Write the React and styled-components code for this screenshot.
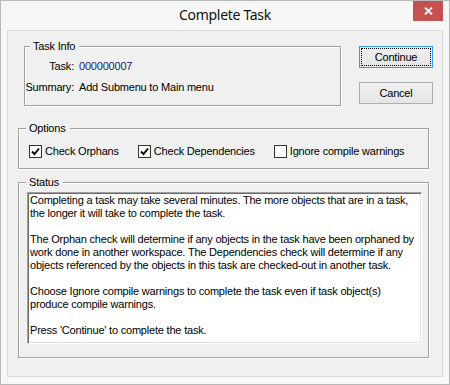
import React from 'react';
import styled, { createGlobalStyle } from 'styled-components';

const GlobalStyle = createGlobalStyle`
	html, body {
		margin: 0;
		padding: 0;
		background: #fff;
	}
	body {
		font-family: "Liberation Sans", Arial, sans-serif;
	}
`;

const Window = styled.div`
	width: 450px;
	height: 385px;
	box-sizing: border-box;
	border: 1px solid #b9b9b9;
	background: #f7f7f7;
	display: flex;
	flex-direction: column;
`;

const TitleBar = styled.div`
	height: 29px;
	flex: none;
	display: grid;
	grid-template-columns: 1fr auto 1fr;
	align-items: start;
`;

const Title = styled.div`
	grid-column: 2;
	font-family: "Noto Sans", "Open Sans", sans-serif;
	font-size: 14px;
	letter-spacing: -0.3px;
	line-height: 28px;
	color: #111;
`;

const CloseButton = styled.div`
	justify-self: end;
	width: 30px;
	height: 20px;
	margin-right: 6px;
	background: #c75050;
	display: flex;
	align-items: center;
	justify-content: center;
`;

const Frame = styled.div`
	flex: 1;
	display: flex;
	padding: 0 6px 7px;
`;

const Client = styled.div`
	flex: 1;
	display: flex;
	flex-direction: column;
	border: 1px solid #d9d9d9;
	background: #f0f0f0;
	font-size: 11px;
	line-height: 13px;
	letter-spacing: -0.2px;
	color: #000;
`;

const TopRow = styled.div`
	display: flex;
	align-items: flex-start;
	gap: 18px;
	padding: 15px 9px 0 16px;
`;

const Group = styled.div`
	position: relative;
	box-sizing: border-box;
	border: 1px solid #a0a0a0;
	box-shadow: inset 1px 1px #fff, 1px 1px #fff;
	width: ${({ $width }) => ($width ? `${$width}px` : 'auto')};
	height: ${({ $height }) => ($height ? `${$height}px` : 'auto')};
	margin: ${({ $margin }) => $margin || '0'};
	flex: ${({ $grow }) => ($grow ? 1 : 'none')};
	display: flex;
	flex-direction: column;
`;

const Legend = styled.span`
	position: absolute;
	top: -7px;
	left: ${({ $inset }) => $inset}px;
	padding: 0 4px 0 3px;
	background: #f0f0f0;
	white-space: nowrap;
`;

const InfoGrid = styled.div`
	display: grid;
	grid-template-columns: 49px auto;
	column-gap: 5px;
	row-gap: 8px;
	padding-top: 13px;
`;

const InfoLabel = styled.span`
	text-align: right;
	white-space: nowrap;
`;

const InfoValue = styled.span`
	white-space: nowrap;
	color: ${({ $accent }) => ($accent ? '#1c1c6c' : '#000')};
`;

const ButtonColumn = styled.div`
	display: flex;
	flex-direction: column;
	gap: 14px;
`;

const Button = styled.button`
	position: relative;
	width: 74px;
	height: 22px;
	padding: 0;
	box-sizing: border-box;
	font: inherit;
	letter-spacing: inherit;
	color: #000;
	border: 1px solid ${({ $default }) => ($default ? '#3399ff' : '#acacac')};
	background: linear-gradient(#f0f0f0, #e5e5e5);

	${({ $default }) =>
		$default &&
		`
		&::after {
			content: '';
			position: absolute;
			inset: 1px;
			border: 1px dotted #000;
		}
	`}
`;

const CheckRow = styled.div`
	display: flex;
	align-items: center;
	gap: 19px;
	padding: 16px 0 0 10px;
`;

const CheckItem = styled.label`
	display: flex;
	align-items: center;
	gap: 3px;
	white-space: nowrap;
`;

const CheckBox = styled.span`
	width: 13px;
	height: 13px;
	box-sizing: border-box;
	border: 1px solid #333;
	background: #fff;
	display: flex;
	align-items: center;
	justify-content: center;
`;

const StatusBody = styled.div`
	flex: 1;
	display: flex;
	padding: 9px 6px 13px 8px;
`;

const TextBox = styled.div`
	flex: 1;
	box-sizing: border-box;
	background: #fff;
	border: 1px solid;
	border-color: #a0a0a0 #fff #fff #a0a0a0;
	box-shadow: inset 1px 1px #696969, inset -1px -1px #e3e3e3;
	padding: 1px 2px;
`;

const Line = styled.div`
	height: 13px;
	white-space: nowrap;
`;

const statusLines = [
	'Completing a task may take several minutes. The more objects that are in a task,',
	'the longer it will take to complete the task.',
	'',
	'The Orphan check will determine if any objects in the task have been orphaned by',
	'work done in another workspace. The Dependencies check will determine if any',
	'objects referenced by the objects in this task are checked-out in another task.',
	'',
	'Choose Ignore compile warnings to complete the task even if task object(s)',
	'produce compile warnings.',
	'',
	"Press 'Continue' to complete the task.",
];

const options = [
	{ label: 'Check Orphans', checked: true },
	{ label: 'Check Dependencies', checked: true },
	{ label: 'Ignore compile warnings', checked: false },
];

const Check = ({ checked }) => (
	<CheckBox>
		{checked && (
			<svg width='11' height='11' viewBox='0 0 11 11'>
				<polyline
					points='2,5.5 4.5,8 9,2.5'
					fill='none'
					stroke='#000'
					strokeWidth='1.9'
				/>
			</svg>
		)}
	</CheckBox>
);

const App = () => {
	return (
		<>
			<GlobalStyle />
			<Window>
				<TitleBar>
					<Title>Complete Task</Title>
					<CloseButton>
						<svg width='9' height='8' viewBox='0 0 9 8'>
							<path d='M1 0.5 L8 7.5 M8 0.5 L1 7.5' stroke='#fff' strokeWidth='1.8' />
						</svg>
					</CloseButton>
				</TitleBar>
				<Frame>
					<Client>
						<TopRow>
							<Group $width={317} $height={60}>
								<Legend $inset={5}>Task Info</Legend>
								<InfoGrid>
									<InfoLabel>Task:</InfoLabel>
									<InfoValue $accent>000000007</InfoValue>
									<InfoLabel>Summary:</InfoLabel>
									<InfoValue>Add Submenu to Main menu</InfoValue>
								</InfoGrid>
							</Group>
							<ButtonColumn>
								<Button $default>Continue</Button>
								<Button>Cancel</Button>
							</ButtonColumn>
						</TopRow>

						<Group $height={41} $margin='22px 13px 0 10px'>
							<Legend $inset={7}>Options</Legend>
							<CheckRow>
								{options.map((option) => (
									<CheckItem key={option.label}>
										<Check checked={option.checked} />
										{option.label}
									</CheckItem>
								))}
							</CheckRow>
						</Group>

						<Group $grow $margin='13px 13px 18px 10px'>
							<Legend $inset={7}>Status</Legend>
							<StatusBody>
								<TextBox>
									{statusLines.map((line, i) => (
										<Line key={i}>{line}</Line>
									))}
								</TextBox>
							</StatusBody>
						</Group>
					</Client>
				</Frame>
			</Window>
		</>
	);
};

export default App;
